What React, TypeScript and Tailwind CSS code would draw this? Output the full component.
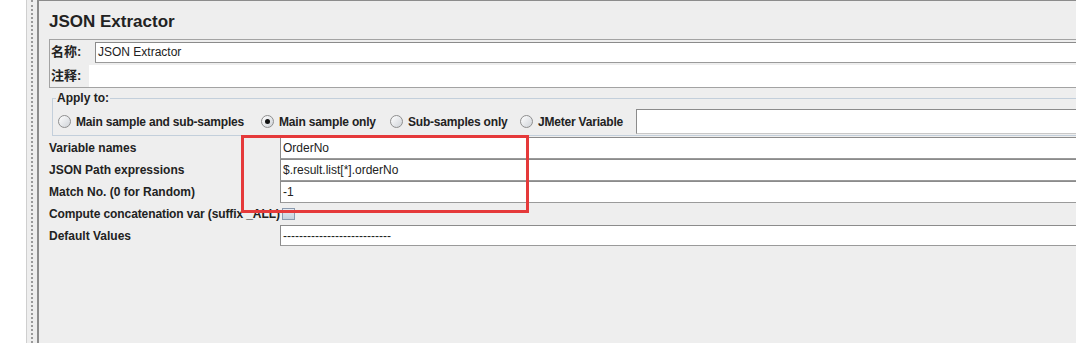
import React from "react";

const sans = { fontFamily: '"Liberation Sans", Arial, sans-serif' };

const Radio = ({ checked }: { checked?: boolean }) => (
  <span className="w-[13px] h-[13px] rounded-full border border-[#8e8e8e] bg-linear-to-br from-white to-[#cfd3d8] flex items-center justify-center shrink-0">
    {checked && <span className="w-[5px] h-[5px] rounded-full bg-[#111]" />}
  </span>
);

const Field = ({ value, h = "h-[22px]" }: { value?: string; h?: string }) => (
  <div className={`flex-1 ${h} bg-white border border-[#8b8b8b] border-b-[#9a9a9a] flex items-center pl-[2px] text-[12px] font-normal text-[#222]`}>
    {value}
  </div>
);

export default function App() {
  const options = [
    { label: "Main sample and sub-samples", w: "w-[203px]" },
    { label: "Main sample only", checked: true, w: "w-[129px]" },
    { label: "Sub-samples only", w: "w-[130px]" },
    { label: "JMeter Variable", w: "w-[116px]" },
  ];

  return (
    <div className="relative w-[1076px] h-[343px] overflow-hidden flex bg-white text-[#222]" style={sans}>
      {/* tree pane edge */}
      <div className="w-[27px] shrink-0 bg-white border-r border-[#cfcfcf]" />
      {/* split divider */}
      <div className="w-[10px] shrink-0 bg-[#eeeeee] flex pl-[4px]">
        <div className="h-full border-l-[2px] border-dotted border-[#9a9a9a]" />
      </div>
      <div className="w-[2px] shrink-0 bg-[#8c8c8c]" />

      {/* content */}
      <div className="w-[1060px] shrink-0 bg-[#eeeeee] border-t border-[#8c8c8c] pl-[10px] font-bold text-[12px]">
        <div className="mt-[11px] h-[20px] leading-[20px] text-[17px] font-bold text-[#222]">JSON Extractor</div>

        {/* name / comment */}
        <div className="mt-[7px] border border-[#a3a3a3]">
          <div className="flex items-center pt-[1px] h-[23px]">
            <span className="w-[45px] pl-[1px] text-[13px] font-bold" style={{ fontFamily: '"Liberation Sans", "Noto Sans CJK SC", sans-serif' }}>
              名称:
            </span>
            <Field value="JSON Extractor" h="h-[21px]" />
          </div>
          <div className="flex items-center h-[23px] mt-[1px]">
            <span className="w-[39px] pl-[1px] text-[13px] font-bold" style={{ fontFamily: '"Liberation Sans", "Noto Sans CJK SC", sans-serif' }}>
              注释:
            </span>
            <div className="flex-1 h-[22px] bg-white" />
          </div>
        </div>

        {/* Apply to */}
        <fieldset className="mt-[3px] ml-[3px] border border-[#c3cfdb] pl-[5px] pt-[4px] pb-[1px]">
          <legend className="-ml-[2px] px-[1px] leading-[14px] text-[12px] font-bold">Apply to:</legend>
          <div className="flex items-center h-[25px]">
            {options.map((o, i) => (
              <div key={i} className={`flex items-center gap-[5px] shrink-0 ${o.w}`}>
                <Radio checked={o.checked} />
                <span className="whitespace-nowrap tracking-[-0.2px]">{o.label}</span>
              </div>
            ))}
            <div className="flex-1 h-[25px] bg-white border border-[#8b8b8b] border-b-[#c8c8c8]" />
          </div>
        </fieldset>

        {/* parameters */}
        <div className="mt-[1px]">
          <div className="flex items-center">
            <span className="w-[231px]">Variable names</span>
            <Field value="OrderNo" />
          </div>
          <div className="flex items-center">
            <span className="w-[231px]">JSON Path expressions</span>
            <Field value="$.result.list[*].orderNo" />
          </div>
          <div className="flex items-center">
            <span className="w-[231px]">Match No. (0 for Random)</span>
            <Field value="-1" />
          </div>
          <div className="flex items-center h-[22px]">
            <span className="whitespace-nowrap tracking-[-0.1px]">Compute concatenation var (suffix _ALL)</span>
            <span className="ml-[2px] w-[13px] h-[12px] border border-[#8a9aae] bg-linear-to-b from-[#e6ecf3] to-[#c5d0dc]" />
          </div>
          <div className="flex items-center">
            <span className="w-[231px]">Default Values</span>
            <Field value="---------------------------" h="h-[21px]" />
          </div>
        </div>
      </div>

      {/* annotation */}
      <div className="absolute left-[241px] top-[135px] w-[288px] h-[78px] border-[3px] border-[#e5393a]" />
    </div>
  );
}
